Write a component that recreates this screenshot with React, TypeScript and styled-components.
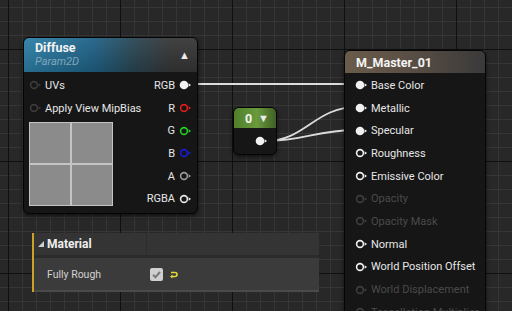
import React from "react";
import styled, { createGlobalStyle } from "styled-components";

const Global = createGlobalStyle`
  html, body { margin: 0; padding: 0; background: #282828; }
  body { font-family: Roboto, "Liberation Sans", sans-serif; }
`;

const Canvas = styled.div`
  position: relative;
  width: 512px;
  height: 311px;
  overflow: hidden;
  background-color: #282828;
  background-image:
    linear-gradient(to right, #0f0f0f 1px, transparent 1px),
    linear-gradient(to bottom, #0f0f0f 1px, transparent 1px),
    linear-gradient(to right, #363636 1px, transparent 1px),
    linear-gradient(to bottom, #363636 1px, transparent 1px);
  background-size: 112px 112px, 112px 112px, 14px 14px, 14px 14px;
  background-position: 8px 0, 0 49px, 8px 0, 0 7px;
`;

const Wires = styled.svg`
  position: absolute;
  left: 0;
  top: 0;
`;

const Node = styled.div<{ $x: number; $y: number; $w: number; $h: number }>`
  position: absolute;
  left: ${(p) => p.$x}px;
  top: ${(p) => p.$y}px;
  width: ${(p) => p.$w}px;
  height: ${(p) => p.$h}px;
  background: #161616;
  border: 1px solid #050505;
  border-radius: 6px;
  box-shadow: 0 2px 4px rgba(0, 0, 0, 0.6);
  display: flex;
  flex-direction: column;
  overflow: hidden;
`;

const Header = styled.div<{ $bg: string; $h: number }>`
  height: ${(p) => p.$h}px;
  flex: none;
  background: ${(p) => p.$bg};
  display: flex;
  align-items: center;
  justify-content: space-between;
  padding: 0 7px 0 11px;
  box-sizing: border-box;
  color: #fff;
`;

const TitleBlock = styled.div`
  display: flex;
  flex-direction: column;
  line-height: 14px;
`;

const Title = styled.span`
  font-size: 12.5px;
  font-weight: bold;
  color: #f4f4f4;
`;

const Subtitle = styled.span`
  font-size: 11px;
  font-style: italic;
  color: #7fa6bb;
`;

const Caret = styled.span`
  font-size: 11px;
  color: #ececec;
`;

const DiffuseBody = styled.div`
  display: flex;
  justify-content: space-between;
  padding: 2px 5px 0 5px;
`;

const Column = styled.div<{ $align: string }>`
  display: flex;
  flex-direction: column;
  align-items: ${(p) => p.$align};
`;

const PinRow = styled.div<{ $out?: boolean; $dim?: boolean }>`
  height: 22.7px;
  display: flex;
  align-items: center;
  flex-direction: ${(p) => (p.$out ? "row-reverse" : "row")};
  gap: ${(p) => (p.$out ? "4px" : "3px")};
  font-size: 11px;
  color: ${(p) => (p.$dim ? "#4a4a4a" : "#e6e6e6")};
  white-space: nowrap;
`;

const Preview = styled.div`
  margin-top: 3px;
  width: 84px;
  height: 84px;
  box-sizing: border-box;
  border: 1px solid #c4c4c4;
  display: grid;
  grid-template-columns: 1fr 1fr;
  grid-template-rows: 1fr 1fr;
  gap: 2px;
  background-color: #c4c4c4;
`;

const Cell = styled.div`
  background: #8b8b8b;
`;

const ConstBody = styled.div`
  flex: 1;
  display: flex;
  align-items: center;
  justify-content: center;
  padding-left: 12px;
`;

const MasterBody = styled.div`
  display: flex;
  flex-direction: column;
  padding: 1px 0 0 10px;
`;

const Panel = styled.div`
  position: absolute;
  left: 32px;
  top: 233px;
  width: 285px;
  border-left: 2px solid #c9a227;
  display: flex;
  flex-direction: column;
`;

const PanelHeader = styled.div`
  height: 22px;
  background: #343434;
  display: grid;
  grid-template-columns: 113px 1fr;
  border-bottom: 3px solid #2b2b2b;
`;

const HeaderCell = styled.div`
  display: flex;
  align-items: center;
  gap: 2px;
  padding-left: 3px;
  font-size: 12px;
  font-weight: bold;
  color: #eeeeee;
  border-right: 1px solid #2c2c2c;
`;

const PropRow = styled.div`
  height: 32px;
  background: #3b3b3b;
  display: grid;
  grid-template-columns: 113px 1fr;
  border-bottom: 2px solid #4a4a4a;
`;

const PropLabel = styled.div`
  display: flex;
  align-items: center;
  padding-left: 13px;
  font-size: 10.5px;
  color: #d2d2d2;
`;

const PropValue = styled.div`
  display: flex;
  align-items: center;
  gap: 6px;
  padding-left: 3px;
`;

const Check = styled.div`
  width: 13px;
  height: 13px;
  border-radius: 2px;
  background: #cfcfcf;
  display: flex;
  align-items: center;
  justify-content: center;
`;

type PinProps = { color: string; filled?: boolean };

const Pin = ({ color, filled }: PinProps) => (
  <svg width="13" height="10" viewBox="0 0 13 10">
    {filled ? (
      <circle cx="5" cy="5" r="4.3" fill={color} />
    ) : (
      <circle cx="5" cy="5" r="3.4" fill="none" stroke={color} strokeWidth="1.6" />
    )}
    <polygon points="9.6,3.2 12,5 9.6,6.8" fill={color} />
  </svg>
);

const masterPins: { label: string; filled?: boolean; dim?: boolean }[] = [
  { label: "Base Color", filled: true },
  { label: "Metallic", filled: true },
  { label: "Specular", filled: true },
  { label: "Roughness" },
  { label: "Emissive Color" },
  { label: "Opacity", dim: true },
  { label: "Opacity Mask", dim: true },
  { label: "Normal" },
  { label: "World Position Offset" },
  { label: "World Displacement", dim: true },
  { label: "Tessellation Multiplier", dim: true },
];

const outputs: { label: string; color: string; filled?: boolean }[] = [
  { label: "RGB", color: "#f2f2f2", filled: true },
  { label: "R", color: "#e01c1c" },
  { label: "G", color: "#1fd01f" },
  { label: "B", color: "#1a1ae0" },
  { label: "A", color: "#9a9a9a" },
  { label: "RGBA", color: "#e8e8e8" },
];

export default function App() {
  return (
    <Canvas>
      <Global />
      <Wires width="512" height="311">
        <g stroke="#dcdcdc" strokeWidth="1.8" fill="none">
          <path d="M188 84 L357 84" />
          <path d="M266 141 C305 141, 315 107, 357 107" />
          <path d="M266 141 C305 141, 315 130, 357 130" />
        </g>
      </Wires>

      <Node $x={23} $y={37} $w={173} $h={175}>
        <Header
          $h={34}
          $bg="linear-gradient(180deg, rgba(255,255,255,0.06) 0%, rgba(0,0,0,0.15) 100%), linear-gradient(90deg, #2d7fa6 0%, #1f6186 40%, #2a4450 65%, #363636 85%)"
        >
          <TitleBlock>
            <Title>Diffuse</Title>
            <Subtitle>Param2D</Subtitle>
          </TitleBlock>
          <Caret>▲</Caret>
        </Header>
        <DiffuseBody>
          <Column $align="flex-start">
            <PinRow>
              <Pin color="#3c3c3c" />
              UVs
            </PinRow>
            <PinRow>
              <Pin color="#3c3c3c" />
              Apply View MipBias
            </PinRow>
            <Preview>
              <Cell />
              <Cell />
              <Cell />
              <Cell />
            </Preview>
          </Column>
          <Column $align="flex-end">
            {outputs.map((o) => (
              <PinRow $out key={o.label}>
                <Pin color={o.color} filled={o.filled} />
                {o.label}
              </PinRow>
            ))}
          </Column>
        </DiffuseBody>
      </Node>

      <Node $x={233} $y={107} $w={42} $h={46}>
        <Header $h={20} $bg="linear-gradient(90deg, #4f7f2a 0%, #6a9a3c 55%, #3f5f24 100%)">
          <Title>0</Title>
          <Caret>▼</Caret>
        </Header>
        <ConstBody>
          <Pin color="#f2f2f2" filled />
        </ConstBody>
      </Node>

      <Node $x={344} $y={50} $w={140} $h={300}>
        <Header $h={22} $bg="linear-gradient(90deg, #6a5b4b 0%, #5a4f45 45%, #3a3a3a 100%)">
          <Title>M_Master_01</Title>
        </Header>
        <MasterBody>
          {masterPins.map((p) => (
            <PinRow key={p.label} $dim={p.dim}>
              <Pin color={p.dim ? "#3e3e3e" : "#f0f0f0"} filled={p.filled} />
              {p.label}
            </PinRow>
          ))}
        </MasterBody>
      </Node>

      <Panel>
        <PanelHeader>
          <HeaderCell>
            <svg width="8" height="8" viewBox="0 0 8 8">
              <polygon points="7,1 7,7 1,7" fill="#cfcfcf" />
            </svg>
            Material
          </HeaderCell>
          <div />
        </PanelHeader>
        <PropRow>
          <PropLabel>Fully Rough</PropLabel>
          <PropValue>
            <Check>
              <svg width="11" height="11" viewBox="0 0 11 11">
                <path d="M2 5.8 L4.4 8.2 L9 3" stroke="#7a7a7a" strokeWidth="2" fill="none" />
              </svg>
            </Check>
            <svg width="9" height="9" viewBox="0 0 9 9">
              <path d="M2 2.5 H6 A2 2 0 0 1 6 6.5 H2.5" stroke="#e0d83a" strokeWidth="1.6" fill="none" />
              <polygon points="1,6.5 3.5,4.5 3.5,8.5" fill="#e0d83a" />
            </svg>
          </PropValue>
        </PropRow>
      </Panel>
    </Canvas>
  );
}
